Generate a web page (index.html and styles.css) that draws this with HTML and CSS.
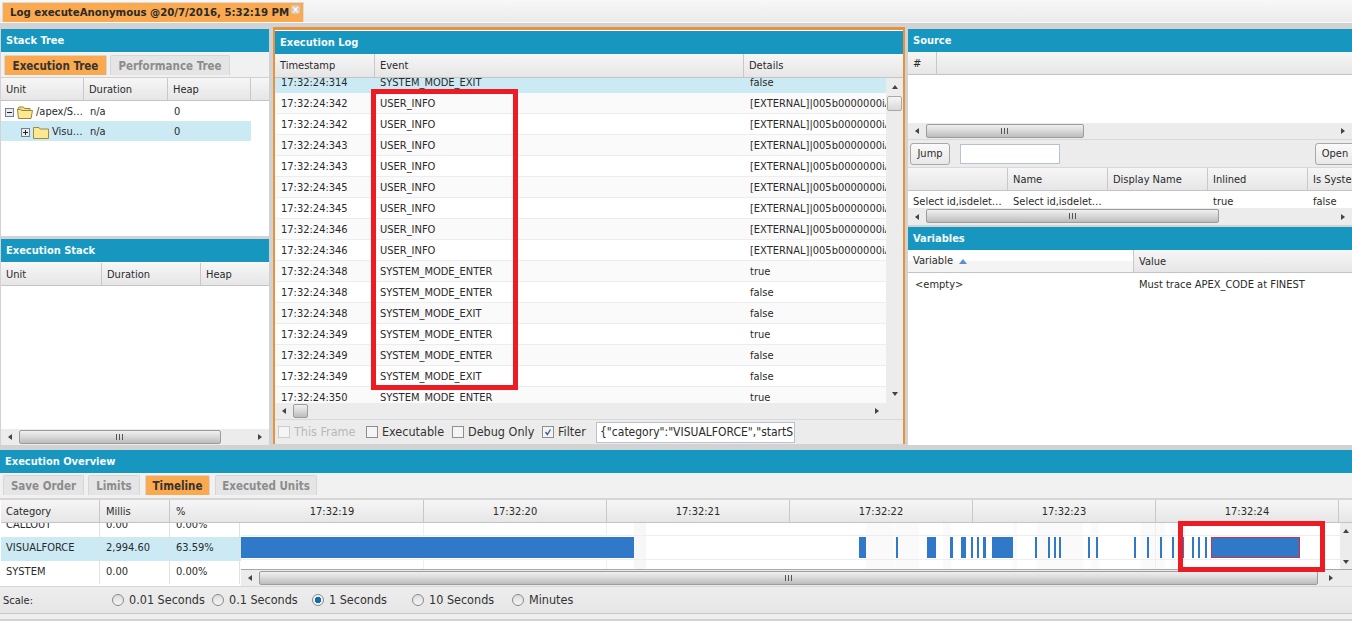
FILE: index.html
```html
<!DOCTYPE html>
<html lang="en">
<head>
<meta charset="utf-8">
<title>Log executeAnonymous</title>
<link rel="stylesheet" href="styles.css">
</head>
<body>
<div class="app">
  <div class="topbar">
    <div class="doc-tab"><span>Log executeAnonymous @20/7/2016, 5:32:19 PM</span><i class="tab-close">×</i></div>
  </div>

  <div class="workspace">
    <div class="col-left">
      <section class="panel stack-tree">
        <h2 class="panel-title">Stack Tree</h2>
        <div class="tabs tabs-tree">
          <div class="tab active">Execution Tree</div>
          <div class="tab">Performance Tree</div>
        </div>
        <div class="ghead cols-tree"><div>Unit</div><div>Duration</div><div>Heap</div><div></div></div>
        <div class="tree-row cols-tree">
          <div class="tree-cell">
            <svg class="node" viewBox="0 0 9 9"><rect x=".5" y=".5" width="8" height="8" fill="#e8ecf2" stroke="#76808c"/><path d="M2 4.5h5" stroke="#222"/></svg>
            <svg class="folder" viewBox="0 0 16 13"><path d="M.5 3.5 2 1h4.5l1 1.5H13v2H4L.5 3.5z" fill="#f5e08c" stroke="#9a8440"/><path d="M.5 3.5h3v-.1L5 4.5h10.5l-1.500 8H1.500z" fill="#fbe88f" stroke="#9a8440"/></svg>
            <span>/apex/S…</span>
          </div>
          <div>n/a</div><div>0</div><div></div>
        </div>
        <div class="tree-row cols-tree selected">
          <div class="tree-cell indent">
            <svg class="node" viewBox="0 0 9 9"><rect x=".5" y=".5" width="8" height="8" fill="#e8ecf2" stroke="#76808c"/><path d="M2 4.500h5M4.500 2v5" stroke="#222"/></svg>
            <svg class="folder" viewBox="0 0 16 13"><path d="M.5 12.500v-11H6l1 1.500h8.500v9.500z" fill="#fbe88f" stroke="#a08a44"/></svg>
            <span>Visu…</span>
          </div>
          <div>n/a</div><div>0</div><div class="blank"></div>
        </div>
      </section>

      <section class="panel stack-list">
        <h2 class="panel-title">Execution Stack</h2>
        <div class="ghead cols-stack"><div>Unit</div><div>Duration</div><div>Heap</div></div>
        <div class="blank-body"></div>
        <div class="hscroll"><i class="arr arr-l"></i><div class="track"><div class="thumb thumb-stack"></div></div><i class="arr arr-r"></i></div>
      </section>
    </div>

    <section class="col-center">
      <h2 class="panel-title">Execution Log</h2>
      <div class="ghead cols-log"><div>Timestamp</div><div>Event</div><div>Details</div></div>
      <div class="log-wrap">
        <div class="log-rows">
          <div class="lrow cols-log first selected"><div>17:32:24:314</div><div>SYSTEM_MODE_EXIT</div><div>false</div></div>
          <div class="lrow cols-log alt"><div>17:32:24:342</div><div>USER_INFO</div><div>[EXTERNAL]|005b0000000iA</div></div>
          <div class="lrow cols-log"><div>17:32:24:342</div><div>USER_INFO</div><div>[EXTERNAL]|005b0000000iA</div></div>
          <div class="lrow cols-log alt"><div>17:32:24:343</div><div>USER_INFO</div><div>[EXTERNAL]|005b0000000iA</div></div>
          <div class="lrow cols-log"><div>17:32:24:343</div><div>USER_INFO</div><div>[EXTERNAL]|005b0000000iA</div></div>
          <div class="lrow cols-log alt"><div>17:32:24:345</div><div>USER_INFO</div><div>[EXTERNAL]|005b0000000iA</div></div>
          <div class="lrow cols-log"><div>17:32:24:345</div><div>USER_INFO</div><div>[EXTERNAL]|005b0000000iA</div></div>
          <div class="lrow cols-log alt"><div>17:32:24:346</div><div>USER_INFO</div><div>[EXTERNAL]|005b0000000iA</div></div>
          <div class="lrow cols-log"><div>17:32:24:346</div><div>USER_INFO</div><div>[EXTERNAL]|005b0000000iA</div></div>
          <div class="lrow cols-log alt"><div>17:32:24:348</div><div>SYSTEM_MODE_ENTER</div><div>true</div></div>
          <div class="lrow cols-log"><div>17:32:24:348</div><div>SYSTEM_MODE_ENTER</div><div>false</div></div>
          <div class="lrow cols-log alt"><div>17:32:24:348</div><div>SYSTEM_MODE_EXIT</div><div>false</div></div>
          <div class="lrow cols-log"><div>17:32:24:349</div><div>SYSTEM_MODE_ENTER</div><div>true</div></div>
          <div class="lrow cols-log alt"><div>17:32:24:349</div><div>SYSTEM_MODE_ENTER</div><div>false</div></div>
          <div class="lrow cols-log"><div>17:32:24:349</div><div>SYSTEM_MODE_EXIT</div><div>false</div></div>
          <div class="lrow cols-log alt"><div>17:32:24:350</div><div>SYSTEM_MODE_ENTER</div><div>true</div></div>
        </div>
        <div class="vscroll log-v"><i class="arr arr-u"></i><div class="vtrack"><div class="vthumb"></div></div><i class="arr arr-d"></i></div>
      </div>
      <div class="hscroll log-h"><i class="arr arr-l"></i><div class="track"><div class="thumb thumb-log"></div></div><i class="arr arr-r"></i></div>
      <div class="log-foot">
        <label class="chk disabled"><i class="box"></i>This Frame</label>
        <label class="chk"><i class="box"></i>Executable</label>
        <label class="chk"><i class="box"></i>Debug Only</label>
        <label class="chk"><i class="box"><svg viewBox="0 0 12 12"><path d="M3 6l2.200 3L9 3" fill="none" stroke="#3c5a94" stroke-width="1.600"/></svg></i>Filter</label>
        <div class="filter-input">{"category":"VISUALFORCE","startS</div>
      </div>
    </section>

    <div class="col-right">
      <section class="panel source">
        <h2 class="panel-title">Source</h2>
        <div class="ghead cols-src"><div>#</div><div></div></div>
        <div class="src-body"></div>
        <div class="hscroll"><i class="arr arr-l"></i><div class="track"><div class="thumb thumb-src"></div></div><i class="arr arr-r"></i></div>
        <div class="src-tools">
          <div class="btn">Jump</div>
          <div class="text-input"></div>
          <div class="btn btn-open">Open</div>
        </div>
        <div class="ghead cols-unit"><div></div><div>Name</div><div>Display Name</div><div>Inlined</div><div>Is System</div></div>
        <div class="unit-row cols-unit"><div>Select id,isdelet…</div><div>Select id,isdelet…</div><div></div><div>true</div><div>false</div></div>
        <div class="hscroll unit-scroll"><i class="arr arr-l"></i><div class="track"><div class="thumb thumb-unit"></div></div><i class="arr arr-r"></i></div>
      </section>
      <section class="panel variables">
        <h2 class="panel-title">Variables</h2>
        <div class="ghead cols-var"><div class="sorted">Variable<svg class="sort" viewBox="0 0 8 5"><path d="M0 5l4-5 4 5z" fill="#5a8ed0"/></svg></div><div>Value</div></div>
        <div class="var-row cols-var"><div>&lt;empty&gt;</div><div>Must trace APEX_CODE at FINEST</div></div>
      </section>
    </div>
  </div>

  <section class="overview">
    <h2 class="panel-title">Execution Overview</h2>
    <div class="tabs tabs-over">
      <div class="tab">Save Order</div>
      <div class="tab">Limits</div>
      <div class="tab active">Timeline</div>
      <div class="tab">Executed Units</div>
    </div>
    <div class="over-grid">
      <div class="cat-table">
        <div class="ghead cols-cat"><div>Category</div><div>Millis</div><div>%</div></div>
        <div class="cat-rows">
          <div class="crow cols-cat clipped"><div>CALLOUT</div><div>0.00</div><div>0.00%</div></div>
          <div class="crow cols-cat selected tall"><div>VISUALFORCE</div><div>2,994.60</div><div>63.59%</div></div>
          <div class="crow cols-cat"><div>SYSTEM</div><div>0.00</div><div>0.00%</div></div>
        </div>
      </div>
      <div class="timeline">
        <div class="thead">
          <div>17:32:19</div><div>17:32:20</div><div>17:32:21</div><div>17:32:22</div><div>17:32:23</div><div>17:32:24</div><div class="rest"></div>
        </div>
        <div class="tbody">
          <div class="chart">
            <i class="band strong" style="left:393px;width:12px"></i>
            <i class="band" style="left:625px;width:28px"></i>
            <i class="band" style="left:654px;width:24px"></i>
            <i class="band" style="left:702px;width:8px"></i>
            <i class="band" style="left:772px;width:4px"></i>
            <i class="band" style="left:796px;width:46px"></i>
            <i class="band" style="left:850px;width:8px"></i>
            <i class="band" style="left:900px;width:24px"></i>
            <i class="band" style="left:930px;width:14px"></i>
            <i class="tick" style="left:182px"></i>
            <i class="tick" style="left:365px"></i>
            <i class="tick" style="left:914px"></i>
            <i class="rule rule-a"></i>
            <i class="rule rule-b"></i>
            <i class="bar" style="left:0;width:393px"></i>
            <i class="bar" style="left:618px;width:7px"></i>
            <i class="bar" style="left:655px;width:2px"></i>
            <i class="bar" style="left:686px;width:9px"></i>
            <i class="bar" style="left:709px;width:3px"></i>
            <i class="bar" style="left:720px;width:5px"></i>
            <i class="bar" style="left:730px;width:2px"></i>
            <i class="bar" style="left:736px;width:2px"></i>
            <i class="bar" style="left:742px;width:3px"></i>
            <i class="bar" style="left:751px;width:21px"></i>
            <i class="bar" style="left:794px;width:2px"></i>
            <i class="bar" style="left:807px;width:2px"></i>
            <i class="bar" style="left:813px;width:2px"></i>
            <i class="bar" style="left:818px;width:2px"></i>
            <i class="bar" style="left:847px;width:2px"></i>
            <i class="bar" style="left:855px;width:2px"></i>
            <i class="bar" style="left:893px;width:2px"></i>
            <i class="bar" style="left:906px;width:2px"></i>
            <i class="bar" style="left:919px;width:2px"></i>
            <i class="bar" style="left:931px;width:2px"></i>
            <i class="bar" style="left:942px;width:1px"></i>
            <i class="bar" style="left:951px;width:2px"></i>
            <i class="bar" style="left:957px;width:2px"></i>
            <i class="bar" style="left:964px;width:2px"></i>
            <i class="bar picked" style="left:970px;width:89px"></i>
          </div>
          <div class="vscroll tl-v"><i class="arr arr-u"></i><div class="vtrack"></div><i class="arr arr-d"></i></div>
        </div>
        <div class="hscroll tl-h"><i class="arr arr-l"></i><div class="track"><div class="thumb thumb-tl"></div></div><i class="arr arr-r"></i></div>
      </div>
    </div>
    <div class="scale">
      <span class="scale-label">Scale:</span>
      <label class="radio"><i class="dot"></i>0.01 Seconds</label>
      <label class="radio"><i class="dot"></i>0.1 Seconds</label>
      <label class="radio"><i class="dot on"></i>1 Seconds</label>
      <label class="radio"><i class="dot"></i>10 Seconds</label>
      <label class="radio"><i class="dot"></i>Minutes</label>
    </div>
  </section>

  <div class="mark mark-log"></div>
  <div class="mark mark-tl"></div>
</div>
</body>
</html>
```
FILE: styles.css
```css
* { box-sizing: border-box; }
html, body { margin: 0; padding: 0; }
body { font: 11px/1 "DejaVu Sans Condensed", "DejaVu Sans", sans-serif; color: #2a2a2a; background: #d2d2d2; overflow: hidden; }
.app { position: relative; width: 1352px; height: 621px; overflow: hidden; display: flex; flex-direction: column; }
i { display: block; font-style: normal; }

/* top bar */
.topbar { height: 23px; flex: none; background: linear-gradient(#f8f8f8, #ebebeb); border-bottom: 1px solid #fafafa; padding: 2px 0 0 2px; }
.doc-tab { width: 302px; height: 20px; background: #fba94f; border: 1px solid #dcdcdc; border-bottom: 0; display: flex; align-items: center; padding-left: 7px; font-weight: bold; font-size: 11.300px; color: #2a2a2a; position: relative; white-space: nowrap; }
.tab-close { position: absolute; right: 3px; top: 2px; width: 9px; height: 9px; line-height: 9px; text-align: center; background: #d8c8b4; color: #fff; font-size: 10px; border-radius: 2px; }

/* workspace */
.workspace { height: 422px; flex: none; display: flex; padding-top: 4px; }
.col-left { width: 268px; margin-left: 1px; margin-right: 4px; padding-top: 2px; flex: none; display: flex; flex-direction: column; gap: 3px; height: 418px; }
.col-center { width: 632px; flex: none; height: 417px; border: 2px solid #e8923a; border-top-width: 3px; border-bottom-width: 0; background: #fff; display: flex; flex-direction: column; }
.col-right { flex: 1; margin-left: 3px; padding-top: 2px; display: flex; flex-direction: column; gap: 2px; min-width: 0; overflow: hidden; }

.panel { background: #fff; display: flex; flex-direction: column; min-height: 0; }
.panel-title { margin: 0; height: 23px; flex: none; background: #1796c0; color: #f4fbfd; font-size: 11px; font-weight: bold; line-height: 24px; padding-left: 5px; }
.col-center .panel-title { margin-top: 1px; }

/* tabs */
.tabs { flex: none; background: #f1f1f1; display: flex; align-items: flex-end; }
.tab { height: 20px; border: 1px solid #d6d6d6; border-bottom: 0; background: #e5e5e5; color: #8c8c8c; font-weight: bold; font-size: 11.500px; line-height: 21px; text-align: center; border-radius: 2px 2px 0 0; }
.tab.active { background: #fba94f; color: #333; }
.tabs-tree { height: 26px; gap: 3px; padding: 0 0 2px 3px; border-bottom: 1px solid #d0d0d0; }
.tabs-tree .tab:nth-child(1) { width: 103px; }
.tabs-tree .tab:nth-child(2) { width: 120px; }
.tabs-over { height: 27px; gap: 4px; padding: 0 0 3px 3px; border-bottom: 2px solid #d6d6d6; }
.tabs-over .tab:nth-child(1) { width: 81px; }
.tabs-over .tab:nth-child(2) { width: 52px; }
.tabs-over .tab:nth-child(3) { width: 65px; margin-left: 1px; }
.tabs-over .tab:nth-child(4) { width: 102px; margin-left: 1px; }

/* grid headers */
.ghead { flex: none; display: grid; height: 23px; background: linear-gradient(#f6f6f6, #e6e6e6); border-bottom: 1px solid #c4c4c4; line-height: 24px; }
.ghead > div { padding-left: 5px; border-right: 1px solid #c8c8c8; white-space: nowrap; overflow: hidden; }
.ghead > div:last-child { border-right: 0; }
.ghead.cols-log { height: 24px; }
.cols-tree { grid-template-columns: 83px 84px 83px 1fr; }
.cols-stack { grid-template-columns: 101px 99px 1fr; }
.cols-log { grid-template-columns: 100px 369px 1fr; }
.cols-src { grid-template-columns: 29px 1fr; }
.cols-unit { grid-template-columns: 100px 100px 100px 100px 100px; }
.cols-var { grid-template-columns: 226px 1fr; }
.cols-cat { grid-template-columns: 99px 70px 70px; }
.selected { background: #cceaf4; }

/* tree */
.tree-row { display: grid; height: 20px; line-height: 22px; }
.tree-row > div { padding-left: 6px; white-space: nowrap; }
.tree-row .tree-cell { padding-left: 4px; display: flex; align-items: center; gap: 3px; }
.tree-cell.indent { padding-left: 20px; }
.node { width: 9px; height: 9px; flex: none; }
.folder { width: 16px; height: 13px; flex: none; }
.tree-row .blank { background: #fff; }
.stack-tree { height: 207px; flex: none; }
.stack-list { flex: 1; }
.stack-list .ghead { margin-top: 1px; }
.blank-body { flex: 1; }

/* scrollbars */
.hscroll { flex: none; height: 16px; background: #ececec; display: flex; align-items: stretch; }
.track { flex: 1; display: flex; align-items: stretch; padding: 1px 0; min-width: 0; }
.thumb { position: relative; height: 14px; border: 1px solid #9c9c9c; border-radius: 2px; background: linear-gradient(#f0f0f0, #d8d8d8 50%, #bcbcbc); }
.thumb::after { content: ""; position: absolute; left: 50%; top: 3px; width: 7px; height: 6px; margin-left: -4px; background: repeating-linear-gradient(90deg, #555 0 1px, transparent 1px 3px); }
.arr { flex: none; width: 18px; position: relative; }
.arr::after { content: ""; position: absolute; left: 50%; top: 50%; width: 0; height: 0; border: 3px solid transparent; }
.arr-l::after { border-right: 4px solid #444; border-left: 0; margin: -3px 0 0 -2px; }
.arr-r::after { border-left: 4px solid #444; border-right: 0; margin: -3px 0 0 -2px; }
.arr-u::after { border-bottom: 4px solid #444; border-top: 0; margin: -2px 0 0 -3px; }
.arr-d::after { border-top: 4px solid #444; border-bottom: 0; margin: -2px 0 0 -3px; }
.thumb-stack { width: 202px; }
.thumb-log { width: 15px; }
.thumb-log::after { display: none; }
.thumb-src { width: 158px; }
.thumb-unit { width: 293px; }
.thumb-tl { width: 1059px; }
.vscroll { flex: none; width: 17px; background: #ececec; display: flex; flex-direction: column; }
.vscroll .arr { width: 100%; height: 15px; }
.log-v .arr { height: 18px; }
.vtrack { flex: 1; }
.vthumb { width: 15px; height: 15px; margin-left: 1px; border: 1px solid #a8a8a8; border-radius: 2px; background: linear-gradient(#f6f6f6, #d8d8d8); }

/* log */
.log-wrap { flex: 1; display: flex; min-height: 0; }
.log-rows { flex: 1; overflow: hidden; min-width: 0; }
.lrow { display: grid; height: 21px; line-height: 22px; border-bottom: 1px solid #ededed; background: #fff; }
.lrow.alt { background: #fafafa; }
.lrow.selected { background: #cceaf4; border-bottom: 0; }
.lrow.first { height: 15px; line-height: 9px; }
.lrow > div { padding-left: 6px; white-space: nowrap; overflow: hidden; }
.lrow > div:nth-child(2) { padding-left: 5px; }
.log-h { padding-right: 17px; }
.log-foot { flex: none; height: 25px; background: #ececec; border-top: 1px solid #d8d8d8; display: flex; align-items: center; padding-left: 3px; font-size: 12.500px; }
.chk { display: flex; align-items: center; gap: 4px; color: #333; flex: none; white-space: nowrap; }
.chk:nth-child(1) { width: 88px; }
.chk:nth-child(2) { width: 86px; }
.chk:nth-child(3) { width: 90px; }
.chk:nth-child(4) { width: 54px; }
.chk.disabled { color: #b8b8b8; }
.box { width: 12px; height: 12px; flex: none; border: 1px solid #8e8e8e; background: #f4f4f4; }
.chk.disabled .box { border-color: #ccc; }
.box svg { display: block; width: 10px; height: 10px; }
.filter-input { width: 199px; height: 21px; flex: none; background: #fff; border: 1px solid #b8c0d4; line-height: 19px; padding-left: 3px; white-space: nowrap; overflow: hidden; font-size: 12px; }

/* right */
.source { flex: none; height: 196px; background: #ececec; }
.variables { flex: 1; }
.src-body { flex: none; height: 48px; background: #fff; }
.src-tools { flex: none; height: 29px; background: #ececec; border-top: 1px solid #d8d8d8; border-bottom: 1px solid #d8d8d8; display: flex; align-items: center; padding-left: 2px; }
.btn { height: 22px; width: 40px; border: 1px solid #a8a8a8; border-radius: 3px; background: linear-gradient(#fafafa, #e8e8e8); text-align: center; line-height: 20px; flex: none; }
.btn-open { margin-left: 255px; }
.text-input { flex: none; width: 100px; height: 20px; margin-left: 10px; background: #fff; border: 1px solid #b8c0d4; }
.unit-row { flex: none; display: grid; height: 17px; line-height: 22px; background: #fff; }
.unit-row > div { padding-left: 5px; white-space: nowrap; overflow: hidden; }
.unit-scroll { height: 17px; }
.sorted { background: linear-gradient(#fff 50%, #f4f4f4 50%); display: flex; align-items: center; gap: 6px; }
.sort { width: 8px; height: 5px; }
.var-row { display: grid; height: 22px; line-height: 24px; }
.var-row > div { padding-left: 5px; white-space: nowrap; }
.var-row > div:first-child { padding-left: 7px; }

/* overview */
.overview { flex: none; margin-top: 5px; display: flex; flex-direction: column; background: #efefef; padding-bottom: 5px; }
.over-grid { flex: none; display: flex; height: 86px; }
.cat-table { width: 241px; flex: none; padding-left: 1px; background: #fff; }
.cols-cat > div { padding-left: 6px; }
.cols-cat > div:first-child { padding-left: 5px; }
.cat-rows { height: 62px; overflow: hidden; background: #fff; }
.crow { display: grid; height: 23px; line-height: 22px; }
.crow > div { border-right: 1px solid #e2e2e2; white-space: nowrap; overflow: hidden; }
.crow.clipped { height: 14px; line-height: 3px; }
.crow.tall { height: 24px; line-height: 21px; }
.timeline { flex: 1; min-width: 0; display: flex; flex-direction: column; }
.thead { flex: none; height: 23px; display: flex; background: linear-gradient(#f6f6f6, #e6e6e6); border-bottom: 1px solid #c4c4c4; }
.thead > div { flex: none; width: 183px; text-align: center; line-height: 24px; border-right: 1px solid #c8c8c8; }
.thead > .rest { flex: 1; width: auto; border-right: 0; }
.tbody { flex: none; height: 46px; display: flex; }
.chart { flex: 1; position: relative; background: #fff; overflow: hidden; }
.band { position: absolute; top: 0; bottom: 0; background: #fafafa; }
.band.strong { background: #f7f7f7; }
.tick { position: absolute; top: 0; bottom: 0; width: 1px; background: #efefef; }
.rule { position: absolute; left: 0; right: 0; height: 1px; background: #eeeeee; }
.rule-a { top: 12px; }
.rule-b { top: 36px; }
.bar { position: absolute; top: 14px; height: 21px; background: #3078c8; }
.bar.picked { outline: 1px solid #d03040; outline-offset: -1px; }
.tl-v { width: 12px; }
.tl-h { height: 17px; border-top: 1px solid #a8a8a8; padding-right: 12px; }
.scale { flex: none; height: 28px; background: linear-gradient(#ededed, #e6e6e6); border-top: 1px solid #d6d6d6; border-bottom: 1px solid #c8c8c8; display: flex; align-items: center; padding-left: 3px; font-size: 12.500px; }
.scale-label { width: 109px; flex: none; font-size: 11px; }
.radio { display: flex; align-items: center; gap: 5px; color: #333; width: 100px; flex: none; white-space: nowrap; }
.dot { width: 12px; height: 12px; flex: none; border-radius: 50%; border: 1px solid #8a8a8a; background: linear-gradient(#dcdcdc, #f6f6f6); }
.dot.on { background: radial-gradient(circle, #0f6fa8 0 3px, #f2f2f2 3.500px); }

/* red annotations drawn over the screenshot */
.mark { position: absolute; border: 5px solid #ed1c24; pointer-events: none; }
.mark-log { left: 371px; top: 89px; width: 147px; height: 301px; }
.mark-tl { left: 1178px; top: 521px; width: 147px; height: 51px; }
```
